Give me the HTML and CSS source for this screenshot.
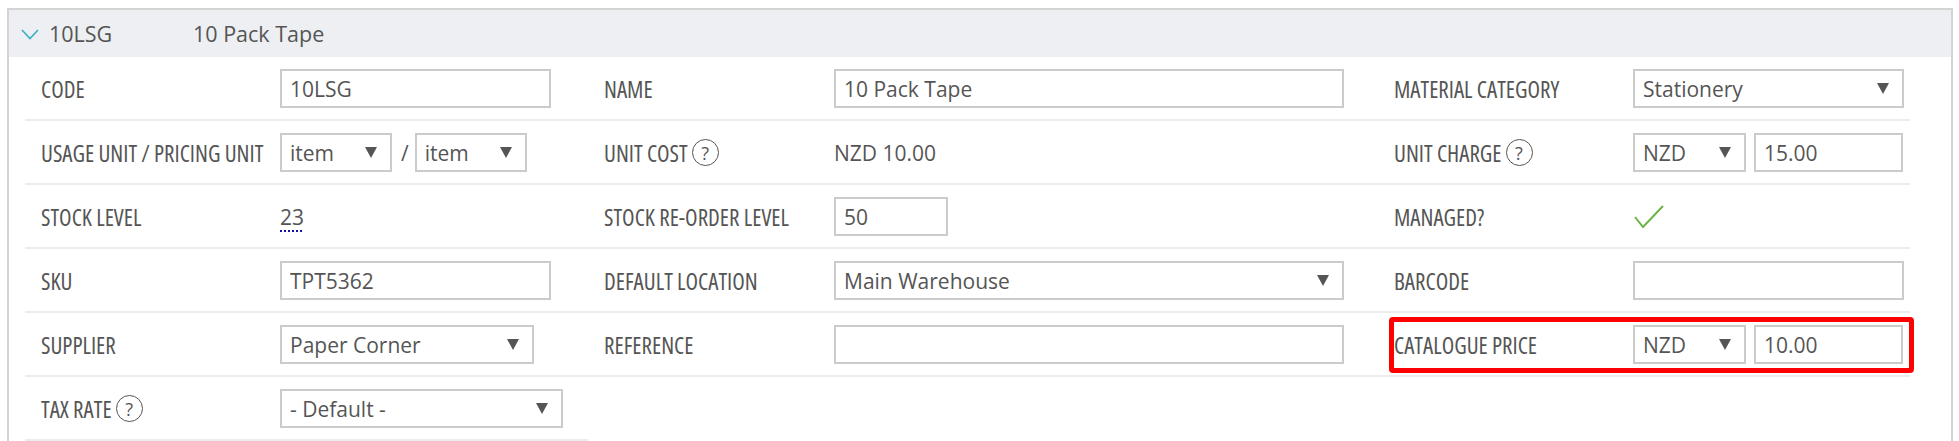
FILE: index.html
```html
<!DOCTYPE html>
<html lang="en">
  <head>
    <meta charset="UTF-8" />
    <meta name="viewport" content="width=device-width, initial-scale=1.0" />
    <title>Material 10LSG</title>
    <link rel="stylesheet" href="styles.css">
  </head>
  <body>

    <div class="panel">
      <div class="panel-head">
        <svg class="chevron" width="18" height="11" viewBox="0 0 18 11">
          <polyline points="1,1 9,9.5 17,1" />
        </svg>
        <span class="head-code">10LSG</span>
        <span class="head-name">10 Pack Tape</span>
      </div>

      <div class="fields">
        <!-- row 1 -->
        <div class="cell label">CODE</div>
        <div class="cell"><input type="text" class="box w-code" value="10LSG" /></div>
        <div class="cell label">NAME</div>
        <div class="cell"><input type="text" class="box w-wide" value="10 Pack Tape" /></div>
        <div class="cell label">MATERIAL CATEGORY</div>
        <div class="cell">
          <div class="select w-code"><span>Stationery</span><i class="arrow"></i></div>
        </div>

        <!-- row 2 -->
        <div class="cell label">USAGE UNIT / PRICING UNIT</div>
        <div class="cell">
          <div class="select w-unit"><span>item</span><i class="arrow"></i></div>
          <span class="slash">/</span>
          <div class="select w-unit"><span>item</span><i class="arrow"></i></div>
        </div>
        <div class="cell label">UNIT COST <span class="help">?</span></div>
        <div class="cell"><span class="value">NZD 10.00</span></div>
        <div class="cell label">UNIT CHARGE <span class="help">?</span></div>
        <div class="cell">
          <div class="select w-cur"><span>NZD</span><i class="arrow"></i></div>
          <input type="text" class="box w-price" value="15.00" />
        </div>

        <!-- row 3 -->
        <div class="cell label">STOCK LEVEL</div>
        <div class="cell"><span class="value stock">23</span></div>
        <div class="cell label">STOCK RE-ORDER LEVEL</div>
        <div class="cell"><input type="text" class="box w-small" value="50" /></div>
        <div class="cell label">MANAGED?</div>
        <div class="cell">
          <svg class="tick" width="32" height="26" viewBox="0 0 32 26">
            <polyline points="2,13 10,23 30,2" />
          </svg>
        </div>

        <!-- row 4 -->
        <div class="cell label">SKU</div>
        <div class="cell"><input type="text" class="box w-code" value="TPT5362" /></div>
        <div class="cell label">DEFAULT LOCATION</div>
        <div class="cell">
          <div class="select w-wide"><span>Main Warehouse</span><i class="arrow"></i></div>
        </div>
        <div class="cell label">BARCODE</div>
        <div class="cell"><input type="text" class="box w-code" value="" /></div>

        <!-- row 5 -->
        <div class="cell label">SUPPLIER</div>
        <div class="cell">
          <div class="select w-supplier"><span>Paper Corner</span><i class="arrow"></i></div>
        </div>
        <div class="cell label">REFERENCE</div>
        <div class="cell"><input type="text" class="box w-wide" value="" /></div>
        <div class="cell label marked">CATALOGUE PRICE<div class="highlight"></div></div>
        <div class="cell">
          <div class="select w-cur"><span>NZD</span><i class="arrow"></i></div>
          <input type="text" class="box w-price" value="10.00" />
        </div>

        <!-- row 6 -->
        <div class="cell label">TAX RATE <span class="help">?</span></div>
        <div class="cell">
          <div class="select w-tax"><span>- Default -</span><i class="arrow"></i></div>
        </div>
      </div>
    </div>

  </body>
</html>
```

FILE: styles.css
```css
body {
  margin: 0;
  background: #fff;
  font-family: "Open Sans", "Noto Sans", sans-serif;
  color: #555;
}

.panel {
  margin: 8px 6px 0 7px;
  height: 433px;
  border: 2px solid #d3d3d3;
  border-bottom: none;
  box-sizing: border-box;
}

.panel-head {
  display: flex;
  align-items: center;
  height: 47px;
  background-color: #edeff2;
  padding-left: 12px;
  font-size: 21.5px;
  color: #555;
}

.chevron {
  fill: none;
  stroke: #3aaec6;
  stroke-width: 1.6;
  margin-top: 2px;
}

.head-code {
  margin-left: 10px;
  width: 144px;
}

.fields {
  display: grid;
  grid-template-columns: 255px 308px 246px 544px 255px 277px;
  margin-left: 16px;
}

.cell {
  display: flex;
  align-items: center;
  height: 64px;
  padding-top: 1px;
  box-sizing: border-box;
  border-bottom: 2px solid #ececec;
}

.label {
  padding-left: 16px;
  font-family: "Open Sans", sans-serif;
  font-stretch: 75%;
  font-weight: 400;
  font-size: 23px;
  color: #555;
  white-space: nowrap;
}

.marked {
  position: relative;
}

.highlight {
  position: absolute;
  left: 11px;
  top: 4px;
  width: 525px;
  height: 56px;
  border: 5px solid #ff0000;
  border-radius: 4px;
  box-sizing: border-box;
}

.help {
  display: inline-flex;
  align-items: center;
  justify-content: center;
  width: 27px;
  height: 27px;
  margin-left: 4px;
  border: 1.5px solid #555;
  border-radius: 50%;
  box-sizing: border-box;
  font-family: "Open Sans", sans-serif;
  font-stretch: 100%;
  font-weight: 400;
  font-size: 18px;
  line-height: 1;
}

.box,
.select {
  height: 39px;
  border: 2px solid #cbcbcb;
  box-sizing: border-box;
  background: #fff;
  font-family: "Open Sans", "Noto Sans", sans-serif;
  font-size: 21px;
  color: #555;
  padding: 0 8px;
}

.box {
  outline: none;
}

.select {
  display: flex;
  align-items: center;
  justify-content: space-between;
  padding-right: 13px;
}

.arrow {
  width: 0;
  height: 0;
  border-left: 6px solid transparent;
  border-right: 6px solid transparent;
  border-top: 11px solid #555;
}

.w-code { width: 271px; }
.w-wide { width: 510px; }
.w-unit { width: 112px; }
.w-small { width: 114px; }
.w-supplier { width: 254px; }
.w-tax { width: 283px; }
.w-cur { width: 113px; margin-right: 8px; }
.w-price { width: 149px; }

.slash {
  margin: 0 6px 0 9px;
  font-size: 21px;
}

.value {
  font-size: 21px;
}

.stock {
  text-decoration: underline dotted #1010a8;
  text-decoration-thickness: 2px;
  text-underline-offset: 6px;
}

.tick {
  fill: none;
  stroke: #6ab443;
  stroke-width: 2;
}
```
